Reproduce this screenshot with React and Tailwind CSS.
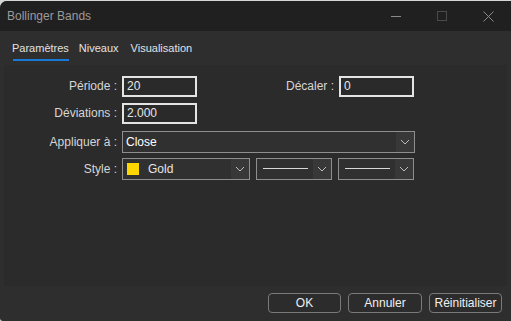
import React from "react";

const Chevron = () => (
  <svg width="10" height="6" viewBox="0 0 10 6" fill="none">
    <path d="M1 1l4 4 4-4" stroke="#bdbdbd" strokeWidth="1" />
  </svg>
);

const Field = ({ value, w = "w-[75px]" }) => (
  <div className={`${w} h-[21px] border-2 border-[#e4e4e4] bg-[#2a2a2a] flex items-center pl-[3px] text-[12px] text-[#e6e6e6]`}>
    {value}
  </div>
);

const Select = ({ children, w }) => (
  <div className={`${w} h-[22px] border border-[#8e8e8e] bg-[#303030] flex items-stretch`}>
    <div className="flex-1 flex items-center min-w-0">{children}</div>
    <div className="w-[18px] flex items-center justify-center bg-[#383838]">
      <Chevron />
    </div>
  </div>
);

const LineSelect = () => (
  <Select w="w-[76px]">
    <div className="ml-[6px] w-[45px] h-px bg-[#d8d8d8]" />
  </Select>
);

const Label = ({ children, w = "w-[114px]" }) => (
  <div className={`${w} text-right pr-px text-[12px] text-[#d6d6d6]`}>{children}</div>
);

const Button = ({ children, w }) => (
  <button className={`${w} h-[20px] rounded-[4px] border border-[#7a7a7a] bg-[#2c2c2c] text-[12px] text-[#f0f0f0] flex items-center justify-center`}>
    {children}
  </button>
);

export default function App() {
  return (
    <div
      className="w-[511px] h-[321px] bg-[#d6d6d6] pt-px overflow-hidden"
      style={{ fontFamily: '"Liberation Sans", Arial, sans-serif' }}
    >
      <div className="h-[320px] rounded-tl-[7px] rounded-bl-[3px] bg-[#2e2e2e] flex flex-col overflow-hidden">
        {/* Title bar */}
        <div className="h-[30px] bg-[#202020] flex items-center">
          <span className="pl-[7px] text-[12px] text-[#9b9b9b]">Bollinger Bands</span>
          <div className="ml-auto flex items-center h-full">
            <div className="w-[46px] flex justify-center">
              <div className="w-[10px] h-px bg-[#8a8a8a]" />
            </div>
            <div className="w-[46px] flex justify-center">
              <div className="w-[10px] h-[10px] border border-[#4a4a4a]" />
            </div>
            <div className="w-[46px] flex justify-center">
              <svg width="11" height="11" viewBox="0 0 11 11">
                <path d="M0.5 0.5l10 10M10.5 0.5l-10 10" stroke="#8a8a8a" strokeWidth="1" />
              </svg>
            </div>
          </div>
        </div>

        {/* Tabs */}
        <div className="flex gap-[10px] pl-[12px] pt-[9px] text-[11px] text-[#e2e2e2]">
          <div className="flex flex-col">
            <span>Paramètres</span>
            <div className="mt-[2px] ml-px h-[2px] bg-[#1a78d6]" />
          </div>
          <span>Niveaux</span>
          <span className="ml-[2px]">Visualisation</span>
        </div>

        {/* Panel */}
        <div className="mx-[4px] mt-[4px] h-[221px] bg-[#2b2b2b] flex flex-col pt-[11px]">
          <div className="flex items-center">
            <Label>Période :</Label>
            <div className="ml-[4px]"><Field value="20" /></div>
            <Label w="w-[138px]">Décaler :</Label>
            <div className="ml-[4px]"><Field value="0" /></div>
          </div>
          <div className="flex items-center mt-[6px]">
            <Label>Déviations :</Label>
            <div className="ml-[4px]"><Field value="2.000" /></div>
          </div>
          <div className="flex items-center mt-[7px]">
            <Label>Appliquer à :</Label>
            <div className="ml-[4px]">
              <Select w="w-[293px]">
                <span className="pl-[3px] text-[12px] text-white">Close</span>
              </Select>
            </div>
          </div>
          <div className="flex items-center mt-[5px]">
            <Label>Style :</Label>
            <div className="ml-[4px] flex gap-[6px]">
              <Select w="w-[128px]">
                <div className="ml-[4px] w-[12px] h-[12px] bg-[#ffd700]" />
                <span className="ml-[9px] text-[12px] text-[#e6e6e6]">Gold</span>
              </Select>
              <LineSelect />
              <LineSelect />
            </div>
          </div>
        </div>

        {/* Buttons */}
        <div className="flex justify-end gap-[7px] pr-[9px] mt-[7px]">
          <Button w="w-[73px]">OK</Button>
          <Button w="w-[74px]">Annuler</Button>
          <Button w="w-[73px]">Réinitialiser</Button>
        </div>
      </div>
    </div>
  );
}
